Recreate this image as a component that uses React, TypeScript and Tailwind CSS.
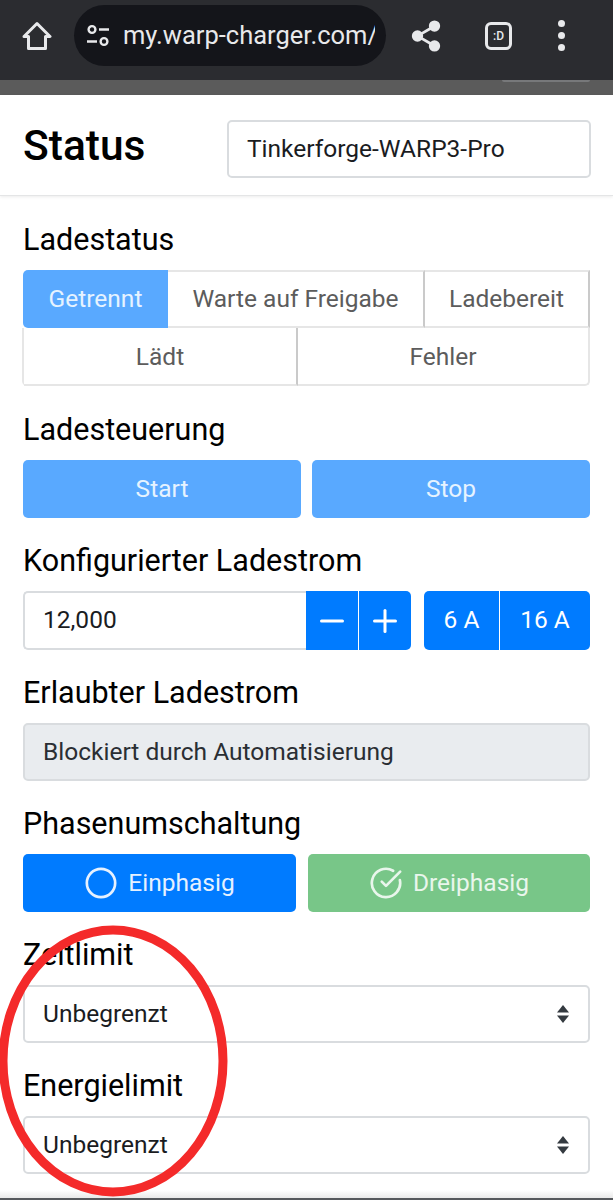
import { Circle, CircleCheckBig, Minus, Plus, Share2 } from "lucide-react";

const blue = "bg-[#007bff]";

const Label = ({ text }: { text: string }) => (
  <div className="h-[73px] pt-[24px] text-[30.5px] leading-[38px] text-black">{text}</div>
);

const SelectBox = ({ value }: { value: string }) => (
  <div className="h-[58px] flex items-center justify-between rounded-[5px] border-2 border-[#d9dcdf] bg-white pl-[18px] pr-[18px] text-[24.5px] text-[#1a1c1f]">
    <span>{value}</span>
    <svg width="14" height="20" viewBox="0 0 14 20" className="fill-[#343a40]">
      <path d="M7 1 13 8.5H1Z" />
      <path d="M7 19 1 11.5H13Z" />
    </svg>
  </div>
);

const StatusCell = ({ text, active, className }: { text: string; active?: boolean; className: string }) => (
  <div
    className={`h-[58px] flex items-center justify-center text-[24.5px] ${className} ${
      active ? "bg-[#59a9ff] text-[#e6f3ff]" : "bg-white text-[#5c5c5c] border-2 border-l-0 border-[#e6e6e6] border-r-[#cacaca]"
    }`}
  >
    {text}
  </div>
);

export default function App() {
  return (
    <div className="relative h-[1200px] w-[613px] overflow-hidden bg-white font-['Roboto',sans-serif]">
      {/* browser bar */}
      <div className="h-[80px] bg-[#2b2c30] flex items-center pl-[22px] pr-[22px] text-[#e8e9eb]">
        <svg width="30" height="30" viewBox="0 0 30 30" fill="none" stroke="currentColor" strokeWidth="3" strokeLinejoin="round" className="shrink-0 -mt-[9px]">
          <path d="M15 2.5 28 15.5H23.5V27.5H6.5V15.5H2Z" />
        </svg>
        <div className="ml-[22px] -mt-[9px] h-[61px] w-[312px] shrink-0 rounded-full bg-[#14151a] flex items-center pl-[12px] overflow-hidden">
          <svg width="24" height="24" viewBox="0 0 24 24" fill="none" stroke="currentColor" strokeWidth="2.4" className="shrink-0">
            <circle cx="6" cy="5.5" r="3.4" />
            <path d="M13 5.5H23" />
            <path d="M1 17.5H11" />
            <circle cx="18" cy="17.5" r="3.4" />
          </svg>
          <span className="ml-[13px] w-[252px] overflow-hidden whitespace-nowrap text-[25.5px]">my.warp-charger.com/d</span>
        </div>
        <Share2 size={34} fill="currentColor" className="ml-[23px] -mt-[9px] shrink-0" />
        <div className="ml-[42px] -mt-[9px] h-[28px] w-[27px] shrink-0 rounded-[6px] border-[3px] border-[#e8e9eb] flex items-center justify-center text-[12px] font-medium">
          :D
        </div>
        <div className="ml-[46px] -mt-[9px] flex flex-col gap-[5px] shrink-0">
          <div className="h-[7px] w-[7px] rounded-full bg-[#e8e9eb]" />
          <div className="h-[7px] w-[7px] rounded-full bg-[#e8e9eb]" />
          <div className="h-[7px] w-[7px] rounded-full bg-[#e8e9eb]" />
        </div>
      </div>
      <div className="h-[15px] bg-[#5b5b5b] flex justify-end pr-[23px]">
        <div className="h-[2px] w-[88px] rounded-b-[4px] bg-[#77787a]" />
      </div>

      {/* header */}
      <div className="h-[101px] pt-[7px] flex items-center justify-between pl-[23px] pr-[22px] border-b border-[#e4e5e6] shadow-[0_1px_3px_rgba(0,0,0,0.08)]">
        <div className="-mt-[5px] text-[42.5px] font-medium text-black">Status</div>
        <div className="h-[58px] w-[364px] flex items-center rounded-[5px] border-2 border-[#d9dcdf] pl-[18px] pt-[1px] text-[24.5px] text-[#1a1c1f]">
          Tinkerforge-WARP3-Pro
        </div>
      </div>

      <div className="pl-[23px] pr-[23px] mt-[1px]">
        <Label text="Ladestatus" />
        <div className="flex">
          <StatusCell text="Getrennt" active className="w-[145px] rounded-l-[5px]" />
          <StatusCell text="Warte auf Freigabe" className="w-[257px]" />
          <StatusCell text="Ladebereit" className="flex-1" />
        </div>
        <div className="-ml-[1px] flex border-l-2 border-[#e6e6e6] rounded-bl-[5px]">
          <StatusCell text="Lädt" className="w-[274px] border-t-0 pt-[2px]" />
          <StatusCell text="Fehler" className="flex-1 border-t-0 pt-[2px] rounded-br-[5px] border-r-[#e6e6e6]" />
        </div>

        <div className="mt-[1px]">
          <Label text="Ladesteuerung" />
        </div>
        <div className="flex gap-[11px]">
          <div className="h-[58px] w-[278px] rounded-[5px] bg-[#59a9ff] flex items-center justify-center text-[24.5px] text-[#e6f3ff]">Start</div>
          <div className="h-[58px] flex-1 rounded-[5px] bg-[#59a9ff] flex items-center justify-center text-[24.5px] text-[#e6f3ff]">Stop</div>
        </div>

        <Label text="Konfigurierter Ladestrom" />
        <div className="flex h-[59px]">
          <div className="w-[283px] flex items-center rounded-l-[5px] border-2 border-r-0 border-[#d9dcdf] pl-[18px] text-[24.5px] text-[#1a1c1f]">12,000</div>
          <div className={`w-[52px] ${blue} flex items-center justify-center text-white`}>
            <Minus size={36} strokeWidth={2} />
          </div>
          <div className={`ml-[1px] w-[52px] rounded-r-[5px] ${blue} flex items-center justify-center text-white`}>
            <Plus size={36} strokeWidth={2} />
          </div>
          <div className={`ml-[13px] w-[75px] rounded-l-[5px] ${blue} flex items-center justify-center text-[24.5px] text-white`}>6 A</div>
          <div className={`ml-[1px] flex-1 rounded-r-[5px] ${blue} flex items-center justify-center text-[24.5px] text-white`}>16 A</div>
        </div>

        <Label text="Erlaubter Ladestrom" />
        <div className="h-[58px] flex items-center rounded-[5px] border-2 border-[#d9dcdf] bg-[#e9ecef] pl-[18px] text-[24.5px] text-[#2a2e33]">
          Blockiert durch Automatisierung
        </div>

        <Label text="Phasenumschaltung" />
        <div className="flex gap-[12px]">
          <div className={`h-[58px] w-[273px] rounded-[5px] ${blue} flex items-center justify-center gap-[10px] text-[24.5px] text-[#e6f1ff]`}>
            <Circle size={34} strokeWidth={1.9} />
            Einphasig
          </div>
          <div className="h-[58px] flex-1 rounded-[5px] bg-[#78c688] flex items-center justify-center gap-[10px] text-[24.5px] text-[#e9f6ec]">
            <CircleCheckBig size={34} strokeWidth={1.9} />
            Dreiphasig
          </div>
        </div>

        <Label text="Zeitlimit" />
        <SelectBox value="Unbegrenzt" />
        <Label text="Energielimit" />
        <SelectBox value="Unbegrenzt" />
      </div>

      {/* page bottom edge */}
      <div className="absolute bottom-0 left-0 right-0 h-[10px] bg-gradient-to-b from-white to-[#e3e3e3]" />
      <div className="absolute bottom-0 left-0 right-0 h-[2px] bg-[#55585c]" />

      {/* red marker circled on the screenshot */}
      <svg className="absolute left-0 top-[920px]" width="240" height="280" viewBox="0 0 240 280" fill="none">
        <ellipse cx="113" cy="141" rx="110" ry="131" stroke="#f42a2a" strokeWidth="9" />
      </svg>
    </div>
  );
}
